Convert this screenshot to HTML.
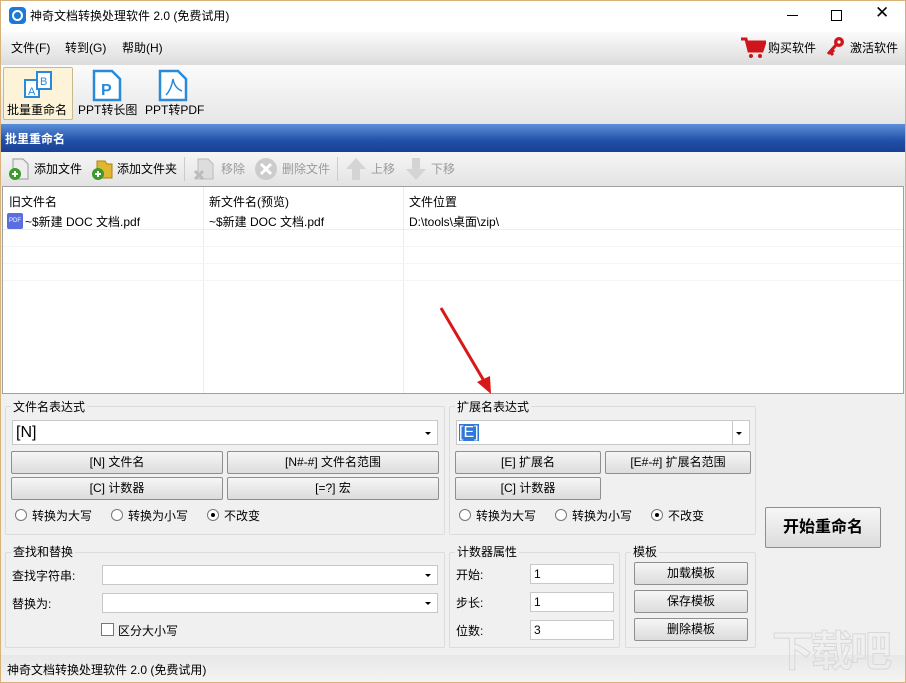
<!DOCTYPE html>
<html><head><meta charset="utf-8"><style>
*{box-sizing:border-box;margin:0;padding:0}
html{width:906px;height:683px;overflow:hidden}
body{width:906px;height:683px;position:relative;overflow:hidden;background:#f0f0f0;font-family:"Liberation Sans","Noto Sans CJK SC",sans-serif;font-size:12px;color:#000}
.a{position:absolute}
.btn{position:absolute;border:1px solid #8e8f8f;border-radius:2px;background:linear-gradient(#f6f6f6,#dcdcdc);text-align:center;font-size:12px;line-height:20px}
.grp{position:absolute;border:1px solid #dcdcdc;border-radius:2px}
.lg{position:absolute;background:#f0f0f0;padding:0 2px;font-size:12px;line-height:14px}
.inp{position:absolute;background:#fff;border:1px solid #c8c8c8}
.dd{position:absolute;right:6px;top:50%;margin-top:-1px;border-left:3px solid transparent;border-right:3px solid transparent;border-top:3px solid #000}
.rad{position:absolute;width:12px;height:12px;border:1px solid #777;border-radius:50%;background:#fff}
.t{position:absolute;white-space:nowrap}
</style></head><body>
<div class="a" style="left:0;top:0;width:906px;height:683px;border:1px solid #d8b27a;pointer-events:none;z-index:9"></div>
<!-- title -->
<div class="a" style="left:0;top:0;width:906px;height:32px;background:#fff"></div>
<div class="a" style="left:9px;top:7px;width:17px;height:17px;border-radius:4px;background:#1e78d8"></div>
<div class="a" style="left:12px;top:10px;width:11px;height:11px;border-radius:50%;border:2px solid #fff"></div>
<div class="t" style="left:30px;top:7px;font-size:12px">神奇文档转换处理软件 2.0 (免费试用)</div>
<div class="a" style="left:787px;top:15px;width:11px;height:1px;background:#000"></div>
<div class="a" style="left:831px;top:10px;width:11px;height:11px;border:1px solid #000"></div>
<div class="t" style="left:875px;top:3px;font-size:17px;font-family:'DejaVu Sans'">✕</div>
<!-- menu -->
<div class="a" style="left:0;top:32px;width:906px;height:33px;background:linear-gradient(#fbfbfb,#dcdcdc)"></div>
<div class="t" style="left:11px;top:39px">文件(F)</div>
<div class="t" style="left:65px;top:39px">转到(G)</div>
<div class="t" style="left:122px;top:39px">帮助(H)</div>
<svg class="a" style="left:740px;top:36px" width="26" height="24"><path d="M1 3h5l3 12h13l3-9H8" fill="none" stroke="#d0141c" stroke-width="3"/><path d="M8 7h17l-3 8H10z" fill="#d0141c"/><circle cx="11" cy="20" r="2" fill="#d0141c"/><circle cx="20" cy="20" r="2" fill="#d0141c"/></svg>
<div class="t" style="left:768px;top:39px">购买软件</div>
<svg class="a" style="left:826px;top:36px" width="20" height="22"><circle cx="13" cy="6" r="5" fill="#d0141c"/><circle cx="13" cy="6" r="1.6" fill="#fff"/><path d="M10 9L2 18M4 16l3 3M6 14l2 2" stroke="#d0141c" stroke-width="3"/></svg>
<div class="t" style="left:850px;top:39px">激活软件</div>
<!-- toolbar -->
<div class="a" style="left:0;top:65px;width:906px;height:59px;background:linear-gradient(#fbfbfb,#e6e6e6)"></div>
<div class="a" style="left:3px;top:67px;width:70px;height:53px;background:#fcf3d8;border:1px solid #c7b98e;border-radius:2px"></div>
<svg class="a" style="left:22px;top:69px" width="34" height="32"><rect x="3" y="11" width="14" height="17" fill="#fff" stroke="#2a8ad8" stroke-width="2"/><rect x="15" y="3" width="14" height="17" fill="#fff" stroke="#2a8ad8" stroke-width="2"/><text x="6" y="26" font-size="11" fill="#2a8ad8" font-family="Liberation Sans">A</text><text x="18" y="16" font-size="11" fill="#2a8ad8" font-family="Liberation Sans">B</text></svg>
<div class="t" style="left:7px;top:101px">批量重命名</div>
<svg class="a" style="left:92px;top:69px" width="30" height="33"><path d="M2 2h18l8 8v21H2z" fill="#fff" stroke="#2a8ad8" stroke-width="2.5"/><text x="9" y="26" font-size="16" font-weight="bold" fill="#2a8ad8" font-family="Liberation Sans">P</text></svg>
<div class="t" style="left:78px;top:101px">PPT转长图</div>
<svg class="a" style="left:158px;top:69px" width="30" height="33"><path d="M2 2h18l8 8v21H2z" fill="#fff" stroke="#2a8ad8" stroke-width="2.5"/><path d="M8 26c4-4 6-10 7-16c1 6 4 10 9 12" fill="none" stroke="#2a8ad8" stroke-width="1.5"/></svg>
<div class="t" style="left:145px;top:101px">PPT转PDF</div>
<!-- blue header -->
<div class="a" style="left:0;top:124px;width:906px;height:28px;background:linear-gradient(#5c8fd8,#2150a8 60%,#1a4094)"></div>
<div class="t" style="left:5px;top:130px;color:#fff;font-weight:bold">批里重命名</div>
<!-- sub toolbar -->
<div class="a" style="left:0;top:152px;width:906px;height:34px;background:linear-gradient(#f6f6f6,#e3e3e3)"></div>
<svg class="a" style="left:7px;top:157px" width="24" height="24"><path d="M6 2h10l5 5v15H6z" fill="#eee" stroke="#999"/><circle cx="8" cy="17" r="6" fill="#3a9a2a"/><path d="M5 17h6M8 14v6" stroke="#fff" stroke-width="2"/></svg>
<div class="t" style="left:34px;top:160px">添加文件</div>
<svg class="a" style="left:90px;top:157px" width="24" height="24"><path d="M7 4h8l2 3h5v14H7z" fill="#e0b830" stroke="#a88418"/><circle cx="8" cy="17" r="6" fill="#3a9a2a"/><path d="M5 17h6M8 14v6" stroke="#fff" stroke-width="2"/></svg>
<div class="t" style="left:117px;top:160px">添加文件夹</div>
<div class="a" style="left:184px;top:157px;width:1px;height:24px;background:#ccc"></div>
<svg class="a" style="left:192px;top:157px" width="24" height="24"><path d="M6 2h10l5 5v15H6z" fill="#ddd" stroke="#bbb"/><path d="M3 14l8 8M11 14l-8 8" stroke="#bbb" stroke-width="3"/></svg>
<div class="t" style="left:221px;top:160px;color:#9a9a9a">移除</div>
<svg class="a" style="left:254px;top:157px" width="24" height="24"><circle cx="12" cy="12" r="11" fill="#ccc"/><path d="M7 7l10 10M17 7L7 17" stroke="#fff" stroke-width="3"/></svg>
<div class="t" style="left:282px;top:160px;color:#9a9a9a">删除文件</div>
<div class="a" style="left:337px;top:157px;width:1px;height:24px;background:#ccc"></div>
<svg class="a" style="left:345px;top:157px" width="22" height="24"><path d="M11 1L1 12h6v11h8V12h6z" fill="#d4d4d4"/></svg>
<div class="t" style="left:371px;top:160px;color:#9a9a9a">上移</div>
<svg class="a" style="left:405px;top:157px" width="22" height="24"><path d="M11 23L1 12h6V1h8v11h6z" fill="#d4d4d4"/></svg>
<div class="t" style="left:431px;top:160px;color:#9a9a9a">下移</div>
<!-- list -->
<div class="a" style="left:2px;top:186px;width:902px;height:208px;background:#fff;border:1px solid #a0a0a0"></div>
<div class="a" style="left:203px;top:187px;width:1px;height:206px;background:#ececec"></div>
<div class="a" style="left:403px;top:187px;width:1px;height:206px;background:#ececec"></div>
<div class="a" style="left:3px;top:229px;width:900px;height:1px;background:#ececec"></div>
<div class="a" style="left:3px;top:246px;width:900px;height:1px;background:#f4f4f4"></div>
<div class="a" style="left:3px;top:263px;width:900px;height:1px;background:#f4f4f4"></div>
<div class="a" style="left:3px;top:280px;width:900px;height:1px;background:#f4f4f4"></div>
<div class="t" style="left:9px;top:193px">旧文件名</div>
<div class="t" style="left:209px;top:193px">新文件名(预览)</div>
<div class="t" style="left:409px;top:193px">文件位置</div>
<div class="a" style="left:7px;top:213px;width:16px;height:16px;background:#5a6ee0;border-radius:2px;color:#fff;font-size:6px;line-height:16px;text-align:center">PDF</div>
<div class="t" style="left:25px;top:213px">~$新建 DOC 文档.pdf</div>
<div class="t" style="left:209px;top:213px">~$新建 DOC 文档.pdf</div>
<div class="t" style="left:409px;top:213px">D:\tools\桌面\zip\</div>
<!-- arrow -->
<svg class="a" style="left:435px;top:300px" width="70" height="100"><path d="M6 8L52 86" stroke="#d81818" stroke-width="3"/><path d="M56 94L42 82L55 76z" fill="#d81818"/></svg>
<!-- name expr group -->
<div class="grp" style="left:5px;top:406px;width:440px;height:129px"></div>
<div class="lg" style="left:11px;top:400px">文件名表达式</div>
<div class="inp" style="left:12px;top:420px;width:426px;height:25px;font-size:16px;line-height:23px;padding-left:3px">[N]<span class="dd"></span></div>
<div class="btn" style="left:11px;top:451px;width:212px;height:23px">[N] 文件名</div>
<div class="btn" style="left:227px;top:451px;width:212px;height:23px">[N#-#] 文件名范围</div>
<div class="btn" style="left:11px;top:477px;width:212px;height:23px">[C] 计数器</div>
<div class="btn" style="left:227px;top:477px;width:212px;height:23px">[=?] 宏</div>
<div class="rad" style="left:15px;top:509px"></div><div class="t" style="left:32px;top:507px">转换为大写</div>
<div class="rad" style="left:111px;top:509px"></div><div class="t" style="left:128px;top:507px">转换为小写</div>
<div class="rad" style="left:207px;top:509px"></div><div class="a" style="left:211px;top:513px;width:4px;height:4px;border-radius:50%;background:#000"></div><div class="t" style="left:224px;top:507px">不改变</div>
<!-- find replace -->
<div class="grp" style="left:5px;top:552px;width:440px;height:96px"></div>
<div class="lg" style="left:11px;top:545px">查找和替换</div>
<div class="t" style="left:12px;top:567px">查找字符串:</div>
<div class="inp" style="left:102px;top:565px;width:336px;height:20px"><span class="dd"></span></div>
<div class="t" style="left:12px;top:595px">替换为:</div>
<div class="inp" style="left:102px;top:593px;width:336px;height:20px"><span class="dd"></span></div>
<div class="a" style="left:101px;top:623px;width:13px;height:13px;border:1px solid #777;background:#fff"></div>
<div class="t" style="left:118px;top:622px">区分大小写</div>
<!-- ext group -->
<div class="grp" style="left:449px;top:406px;width:307px;height:129px"></div>
<div class="lg" style="left:455px;top:400px">扩展名表达式</div>
<div class="inp" style="left:456px;top:420px;width:294px;height:25px;font-size:16px;line-height:23px;padding-left:2px"><span style="background:#3078d8;color:#fff">[E]</span><div class="a" style="left:275px;top:0;width:1px;height:23px;background:#c8c8c8"></div><span class="dd" style="right:7px"></span></div>
<div class="btn" style="left:455px;top:451px;width:146px;height:23px">[E] 扩展名</div>
<div class="btn" style="left:605px;top:451px;width:146px;height:23px">[E#-#] 扩展名范围</div>
<div class="btn" style="left:455px;top:477px;width:146px;height:23px">[C] 计数器</div>
<div class="rad" style="left:459px;top:509px"></div><div class="t" style="left:476px;top:507px">转换为大写</div>
<div class="rad" style="left:555px;top:509px"></div><div class="t" style="left:572px;top:507px">转换为小写</div>
<div class="rad" style="left:651px;top:509px"></div><div class="a" style="left:655px;top:513px;width:4px;height:4px;border-radius:50%;background:#000"></div><div class="t" style="left:668px;top:507px">不改变</div>
<!-- counter -->
<div class="grp" style="left:449px;top:552px;width:171px;height:96px"></div>
<div class="lg" style="left:455px;top:545px">计数器属性</div>
<div class="t" style="left:456px;top:566px">开始:</div>
<div class="inp" style="left:530px;top:564px;width:84px;height:20px;padding-left:3px;line-height:18px">1</div>
<div class="t" style="left:456px;top:594px">步长:</div>
<div class="inp" style="left:530px;top:592px;width:84px;height:20px;padding-left:3px;line-height:18px">1</div>
<div class="t" style="left:456px;top:622px">位数:</div>
<div class="inp" style="left:530px;top:620px;width:84px;height:20px;padding-left:3px;line-height:18px">3</div>
<!-- template -->
<div class="grp" style="left:625px;top:552px;width:131px;height:96px"></div>
<div class="lg" style="left:631px;top:545px">模板</div>
<div class="btn" style="left:634px;top:562px;width:114px;height:23px">加载模板</div>
<div class="btn" style="left:634px;top:590px;width:114px;height:23px">保存模板</div>
<div class="btn" style="left:634px;top:618px;width:114px;height:23px">删除模板</div>
<!-- start -->
<div class="btn" style="left:765px;top:507px;width:116px;height:41px;font-size:16px;font-weight:bold;line-height:39px">开始重命名</div>
<!-- status -->
<div class="a" style="left:0;top:655px;width:906px;height:28px;background:linear-gradient(#e8e8e8,#f4f4f4)"></div>
<div class="t" style="left:7px;top:661px">神奇文档转换处理软件 2.0 (免费试用)</div>
<!-- watermark -->
<div class="t" style="left:772px;top:628px;font-size:42px;line-height:48px;color:transparent;-webkit-text-stroke:1px #d8d8d8;font-weight:bold;letter-spacing:-3px">下载吧</div>
</body></html>
